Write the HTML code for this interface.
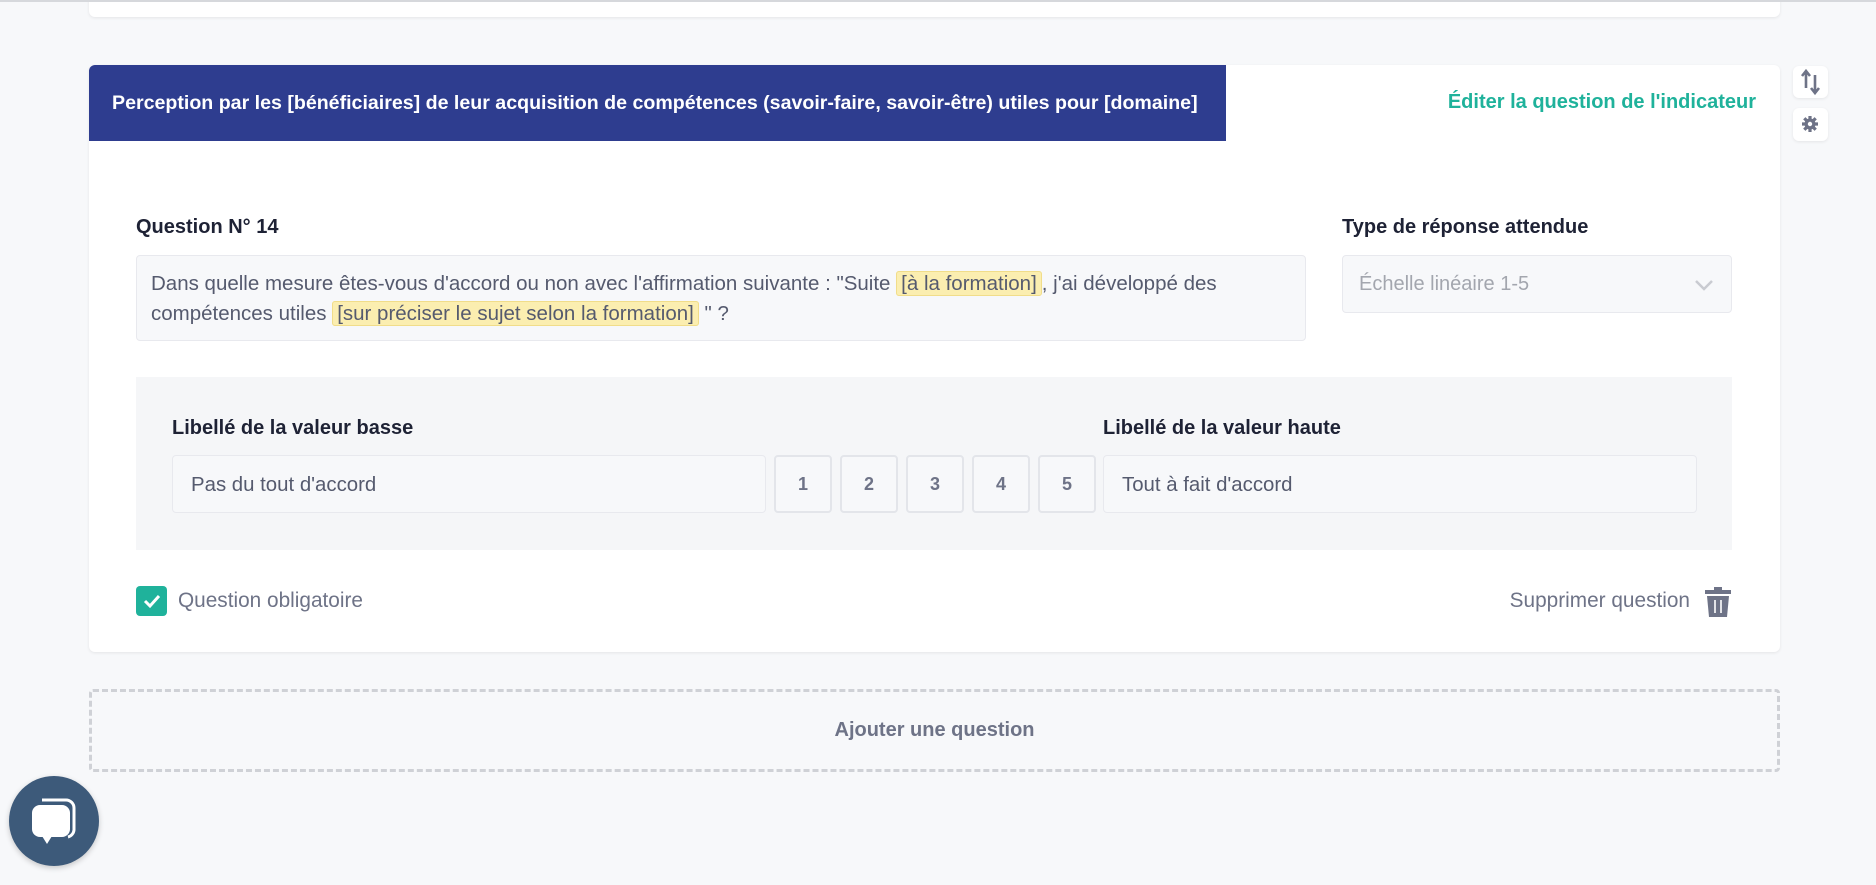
<!DOCTYPE html>
<html><head><meta charset="utf-8"><style>
*{box-sizing:border-box;margin:0;padding:0}
body{width:1876px;height:885px;background:#f7f8fa;font-family:"Liberation Sans",sans-serif;position:relative;overflow:hidden;color:#1e2235}
.a{position:absolute}
.card{background:#fff;border-radius:6px;box-shadow:0 1px 3px rgba(0,0,0,.08)}
.lbl{font-size:20px;font-weight:bold;color:#1e2235}
.inp{background:#f7f8fa;border:1px solid #e8e9ee;border-radius:4px}
.num{width:58px;height:58px;top:455px;border:2px solid #e3e5ea;border-radius:4px;background:#f7f8fa;color:#6e7387;font-weight:bold;font-size:18px;display:flex;align-items:center;justify-content:center}
.hl{background:#fbeeb0;border:1px solid #f1dd8a;border-radius:3px;padding:0 4px}
</style></head><body>
<div class="a card" style="left:89px;top:-10px;width:1691px;height:27px;border-top:none"></div>
<div class="a" style="left:0;top:0;width:1876px;height:2px;background:#d6d8dc"></div>

<div class="a card" style="left:89px;top:65px;width:1691px;height:587px"></div>
<div class="a" style="left:89px;top:65px;width:1137px;height:76px;background:#2e3d8f;border-top-left-radius:6px;color:#fff;font-weight:bold;font-size:19.6px;line-height:76px;padding-left:23px;white-space:nowrap">Perception par les [bénéficiaires] de leur acquisition de compétences (savoir-faire, savoir-être) utiles pour [domaine]</div>
<div class="a" style="right:120px;top:91px;color:#1fb29b;font-size:20px;font-weight:bold;white-space:nowrap">Éditer la question de l'indicateur</div>

<div class="a card" style="left:1793px;top:66px;width:35px;height:32px"></div>
<svg class="a" style="left:1798px;top:68px" width="26" height="28" viewBox="0 0 26 28"><path d="M8 4v16M4 8l4-5 4 5" stroke="#6e7387" stroke-width="2.6" fill="none"/><path d="M17 7v17M13 20l4 5 4-5" stroke="#6e7387" stroke-width="2.6" fill="none"/></svg>
<div class="a card" style="left:1793px;top:108px;width:35px;height:33px"></div>
<svg class="a" style="left:1801px;top:115px" width="18" height="18" viewBox="0 0 18 18"><g fill="#6e7387"><circle cx="9" cy="9" r="5.5"/><g stroke="#6e7387" stroke-width="3.2"><path d="M9 1v16M1 9h16M3.3 3.3l11.4 11.4M14.7 3.3L3.3 14.7"/></g></g><circle cx="9" cy="9" r="2.2" fill="#fff"/></svg>

<div class="a lbl" style="left:136px;top:216px">Question N° 14</div>
<div class="a inp" style="left:136px;top:255px;width:1170px;height:86px;padding:13px 0 0 14px;font-size:20.5px;line-height:30px;color:#555a6e;white-space:nowrap">Dans quelle mesure êtes-vous d'accord ou non avec l'affirmation suivante : "Suite <span class="hl">[à la formation]</span>, j'ai développé des<br>compétences utiles <span class="hl">[sur préciser le sujet selon la formation]</span> " ?</div>

<div class="a lbl" style="left:1342px;top:216px">Type de réponse attendue</div>
<div class="a inp" style="left:1342px;top:255px;width:390px;height:58px;padding-left:16px;line-height:56px;font-size:20px;color:#a3a6ae">Échelle linéaire 1-5</div>
<svg class="a" style="left:1694px;top:279px" width="20" height="12" viewBox="0 0 20 12"><path d="M2 2l8 8 8-8" stroke="#c9cbd1" stroke-width="2.5" fill="none"/></svg>

<div class="a" style="left:136px;top:377px;width:1596px;height:173px;background:#f5f6f8"></div>
<div class="a lbl" style="left:172px;top:417px">Libellé de la valeur basse</div>
<div class="a inp" style="left:172px;top:455px;width:594px;height:58px;padding-left:18px;line-height:58px;font-size:20.4px;color:#555a6e">Pas du tout d'accord</div>
<div class="a num" style="left:774px">1</div>
<div class="a num" style="left:840px">2</div>
<div class="a num" style="left:906px">3</div>
<div class="a num" style="left:972px">4</div>
<div class="a num" style="left:1038px">5</div>
<div class="a lbl" style="left:1103px;top:417px">Libellé de la valeur haute</div>
<div class="a inp" style="left:1103px;top:455px;width:594px;height:58px;padding-left:18px;line-height:58px;font-size:20.4px;color:#555a6e">Tout à fait d'accord</div>

<div class="a" style="left:136px;top:586px;width:31px;height:30px;background:#1fb29b;border-radius:4px"></div>
<svg class="a" style="left:143px;top:593px" width="18" height="16" viewBox="0 0 18 16"><path d="M2 8l5 5 9-10" stroke="#fff" stroke-width="3" fill="none"/></svg>
<div class="a" style="left:178px;top:589px;font-size:20.8px;color:#6e7387">Question obligatoire</div>

<div class="a" style="right:186px;top:589px;font-size:20.8px;color:#6e7387">Supprimer question</div>
<svg class="a" style="left:1705px;top:586px" width="26" height="31" viewBox="0 0 26 31"><path d="M9 1h8v3h9v4H0V4h9z" fill="#6e7387"/><path d="M2 10h22l-2 21H4z" fill="#6e7387"/><path d="M10 14v13M16 14v13" stroke="#fff" stroke-width="1.6"/></svg>

<div class="a" style="left:89px;top:689px;width:1691px;height:83px;border:3px dashed #cfd1d6;border-radius:4px;text-align:center;line-height:77px;font-size:20px;font-weight:bold;color:#6e7387">Ajouter une question</div>

<div class="a" style="left:9px;top:776px;width:90px;height:90px;border-radius:50%;background:#3d5a7a;box-shadow:0 2px 6px rgba(0,0,0,.2)"></div>
<svg class="a" style="left:30px;top:797px" width="50" height="50" viewBox="0 0 50 50"><path d="M12 3h24a8 8 0 0 1 8 8v22a8 8 0 0 1-6 7" stroke="#fff" stroke-width="3" fill="none"/><rect x="2" y="8" width="38" height="32" rx="8" fill="#fff"/><path d="M12 39h10l-5 8z" fill="#fff"/></svg>
</body></html>
